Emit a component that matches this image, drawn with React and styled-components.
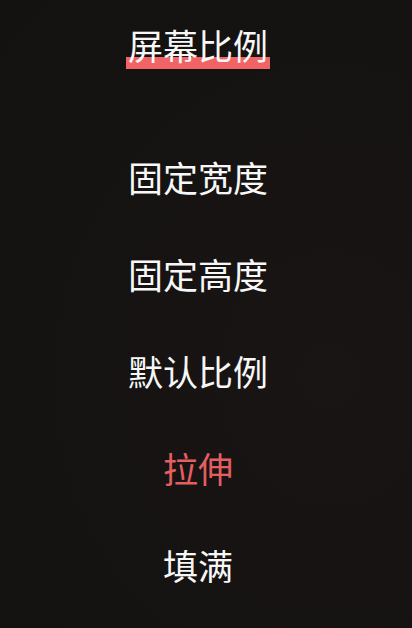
import React from "react";
import styled, { createGlobalStyle } from "styled-components";

const Global = createGlobalStyle`
  html, body { margin: 0; padding: 0; background: #151212; }
  body { font-family: "Noto Sans CJK SC", "Noto Sans", sans-serif; }
`;

const Page = styled.div`
  width: 412px;
  height: 628px;
  box-sizing: border-box;
  padding: 26px 16px 0 0;
  background: radial-gradient(ellipse at 80% 60%, #1a1515 0%, #151212 60%, #141111 100%);
  display: flex;
  flex-direction: column;
  align-items: center;
  overflow: hidden;
`;

const Title = styled.h1`
  margin: 0;
  display: inline-block;
  font-size: 35px;
  font-weight: 400;
  line-height: 38px;
  height: 38px;
  padding: 0 2px 5px;
  color: #f7f7f7;
  background-image: linear-gradient(#f06466, #f06466);
  background-repeat: no-repeat;
  background-position: left bottom;
  background-size: 100% 12px;
`;

const TitleText = styled.span`
  position: relative;
`;

const Options = styled.ul`
  list-style: none;
  margin: 59px 0 0;
  padding: 0;
  display: flex;
  flex-direction: column;
  align-items: center;
`;

const Option = styled.li`
  height: 97px;
  line-height: 97px;
  font-size: 35px;
  font-weight: 400;
  color: ${(p) => (p.$active ? "#e45f60" : "#f7f7f7")};
`;

const items = ["固定宽度", "固定高度", "默认比例", "拉伸", "填满"];

export default function App() {
  return (
    <>
      <Global />
      <Page>
        <Title>
          <TitleText>屏幕比例</TitleText>
        </Title>
        <Options>
          {items.map((t) => (
            <Option key={t} $active={t === "拉伸"}>
              {t}
            </Option>
          ))}
        </Options>
      </Page>
    </>
  );
}
